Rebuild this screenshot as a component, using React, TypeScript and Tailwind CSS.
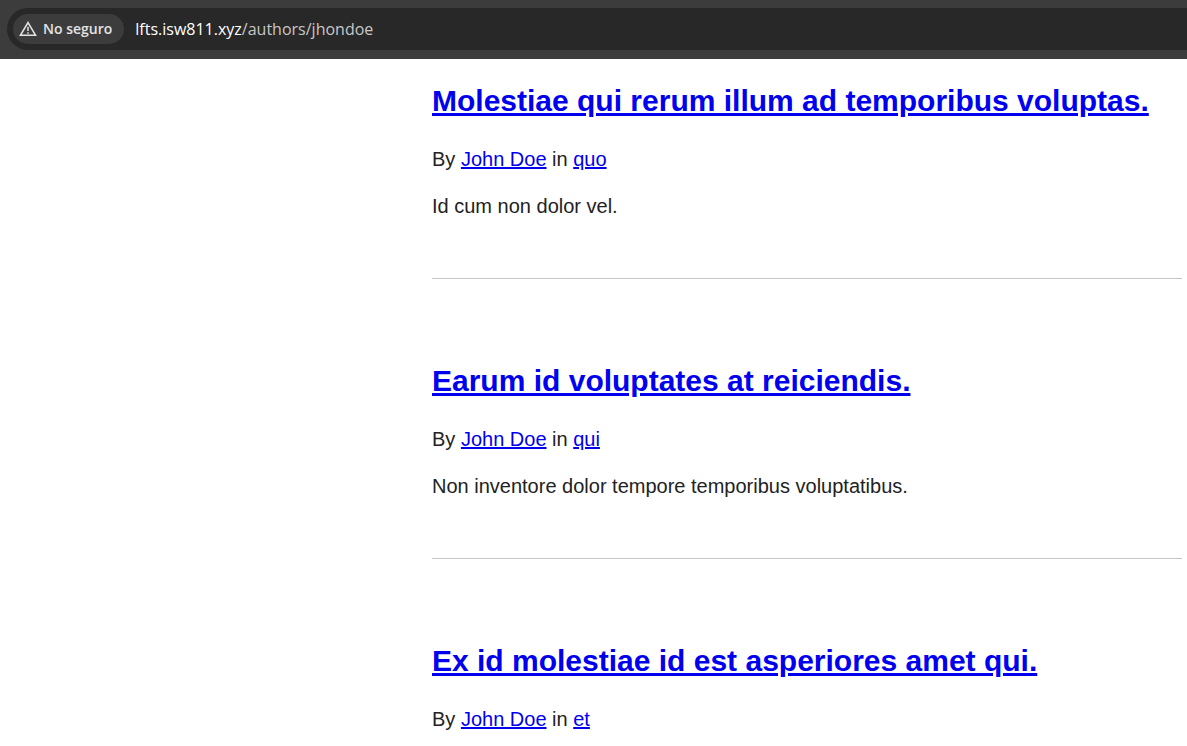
interface Post {
  title: string;
  category: string;
  excerpt?: string;
}

const posts: Post[] = [
  { title: "Molestiae qui rerum illum ad temporibus voluptas.", category: "quo", excerpt: "Id cum non dolor vel." },
  { title: "Earum id voluptates at reiciendis.", category: "qui", excerpt: "Non inventore dolor tempore temporibus voluptatibus." },
  { title: "Ex id molestiae id est asperiores amet qui.", category: "et" },
];

const link = "text-[#0000ee] underline";

function AddressBar() {
  return (
    <header className="bg-[#3c3c3c] pt-2 pb-[9px] pl-[7px]">
      <div className="flex h-[42px] items-center gap-[11px] rounded-l-full bg-[#282828] pl-1.5 font-['Open_Sans',sans-serif]">
        <button type="button" className="flex h-[30px] items-center gap-1.5 rounded-full bg-[#3c3c3c] pr-3 pl-1.5 text-sm font-semibold text-[#e3e3e3]">
          <svg width="18" height="16" viewBox="0 0 18 16" fill="none" aria-hidden="true">
            <path d="M9 1.6 16.5 14.2H1.5Z" stroke="#e3e3e3" strokeWidth="1.6" />
            <path d="M9 5.8V10M9 11.2V12.8" stroke="#e3e3e3" strokeWidth="1.5" />
          </svg>
          No seguro
        </button>
        <p className="text-base text-[#c7c7c7]">
          <span className="text-white">lfts.isw811.xyz</span>/authors/jhondoe
        </p>
      </div>
    </header>
  );
}

function PostPreview({ post }: { post: Post }) {
  return (
    <article className="mb-[84px] border-b border-[#c5c5c5] pb-[58px] last:mb-0 last:border-0 last:pb-0">
      <h1 className="text-3xl leading-9 font-bold">
        <a href="#" className={link}>{post.title}</a>
      </h1>
      <p className="mt-[26px] text-xl leading-7">
        By <a href="#" className={link}>John Doe</a> in <a href="#" className={link}>{post.category}</a>
      </p>
      {post.excerpt && <p className="mt-[19px] text-xl leading-7">{post.excerpt}</p>}
    </article>
  );
}

export default function App() {
  return (
    <div className="min-h-screen bg-white">
      <AddressBar />
      <main className="pt-6 pr-[5px] pl-[432px] font-['Liberation_Sans',Arial,sans-serif] text-[#222222]">
        {posts.map((post) => (
          <PostPreview key={post.title} post={post} />
        ))}
      </main>
    </div>
  );
}
